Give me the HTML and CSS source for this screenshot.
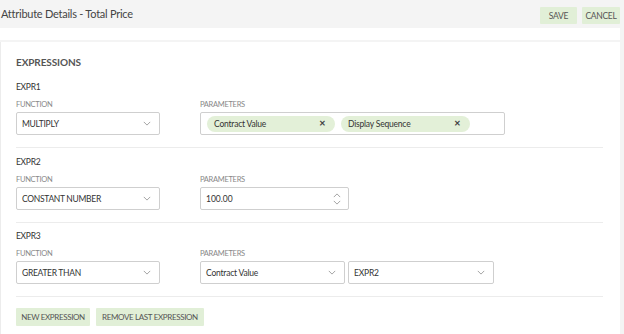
FILE: index.html
```html
<!DOCTYPE html>
<html>
<head>
<meta charset="utf-8">
<link rel="stylesheet" href="styles.css">
</head>
<body>
<header class="topbar">
  <div class="title">Attribute Details - Total Price</div>
  <div class="actions">
    <button class="btn">SAVE</button>
    <button class="btn">CANCEL</button>
  </div>
</header>
<div class="strip"></div>
<main class="card">
  <h2 class="heading">EXPRESSIONS</h2>

  <section class="expr">
    <div class="expr-name">EXPR1</div>
    <div class="row">
      <div class="col fn">
        <div class="label">FUNCTION</div>
        <div class="select w-fn"><span>MULTIPLY</span><svg class="chev" viewBox="0 0 10 6"><path d="M1 1l4 4 4-4"/></svg></div>
      </div>
      <div class="col">
        <div class="label">PARAMETERS</div>
        <div class="tags">
          <span class="chip"><span>Contract Value</span><span class="x">✕</span></span>
          <span class="chip"><span>Display Sequence</span><span class="x">✕</span></span>
        </div>
      </div>
    </div>
  </section>

  <section class="expr">
    <div class="expr-name">EXPR2</div>
    <div class="row">
      <div class="col fn">
        <div class="label">FUNCTION</div>
        <div class="select w-fn"><span>CONSTANT NUMBER</span><svg class="chev" viewBox="0 0 10 6"><path d="M1 1l4 4 4-4"/></svg></div>
      </div>
      <div class="col">
        <div class="label">PARAMETERS</div>
        <div class="number"><span>100.00</span>
          <span class="spin"><svg viewBox="0 0 10 6"><path d="M1 5l4-4 4 4"/></svg><svg viewBox="0 0 10 6"><path d="M1 1l4 4 4-4"/></svg></span>
        </div>
      </div>
    </div>
  </section>

  <section class="expr">
    <div class="expr-name">EXPR3</div>
    <div class="row">
      <div class="col fn">
        <div class="label">FUNCTION</div>
        <div class="select w-fn"><span>GREATER THAN</span><svg class="chev" viewBox="0 0 10 6"><path d="M1 1l4 4 4-4"/></svg></div>
      </div>
      <div class="col">
        <div class="label">PARAMETERS</div>
        <div class="pair">
          <div class="select w-p1 normal"><span>Contract Value</span><svg class="chev" viewBox="0 0 10 6"><path d="M1 1l4 4 4-4"/></svg></div>
          <div class="select w-p2 normal"><span>EXPR2</span><svg class="chev" viewBox="0 0 10 6"><path d="M1 1l4 4 4-4"/></svg></div>
        </div>
      </div>
    </div>
  </section>

  <div class="footer">
    <button class="btn big">NEW EXPRESSION</button>
    <button class="btn big">REMOVE LAST EXPRESSION</button>
  </div>
</main>
</body>
</html>
```

FILE: styles.css
```css
* { box-sizing: border-box; }
html, body { margin: 0; padding: 0; }
body {
  background: #f4f4f4;
  font-family: Lato, "Open Sans", sans-serif;
  color: #444;
  width: 624px;
  height: 334px;
  overflow: hidden;
}
.topbar {
  height: 28px;
  display: flex;
  align-items: center;
  justify-content: space-between;
  padding: 0 4px 0 1px;
}
.title { font-size: 11px; color: #444; margin-top: -1px; letter-spacing: -0.25px; }
.actions { display: flex; gap: 5px; margin-top: 3px; }
.btn {
  border: 0;
  background: #e1efd7;
  color: #555;
  font-family: inherit;
  font-size: 8.5px;
  height: 17px;
  padding: 0;
  border-radius: 1px;
  white-space: nowrap;
  letter-spacing: -0.3px;
  cursor: pointer;
}
.actions .btn:first-child { width: 37px; }
.actions .btn:last-child { width: 38px; }
.strip {
  height: 12px;
  width: 620px;
  background: #fff;
}
.card {
  margin-top: 2px;
  width: 620px;
  height: 300px;
  background: #fff;
  border-left: 1px solid #ececec;
  padding: 14px 17px 0 15px;
}
.heading {
  margin: 0 0 5px;
  font-size: 10px;
  line-height: 12px;
  font-weight: 700;
  color: #555;
  letter-spacing: -0.1px;
}
.expr {
  padding: 8px 0 12px;
  border-bottom: 1px solid #ececec;
}
.expr:nth-of-type(3) { padding-top: 7px; }
.expr-name {
  font-size: 8.5px;
  line-height: 12px;
  color: #333;
  margin-bottom: 7px;
  letter-spacing: -0.3px;
}
.row { display: flex; gap: 40px; }
.col { display: flex; flex-direction: column; }
.fn { width: 144px; }
.label {
  font-size: 7.5px;
  line-height: 10px;
  color: #888;
  margin-bottom: 2px;
  letter-spacing: -0.3px;
}
.select, .number, .tags {
  height: 23px;
  border: 1px solid #cfcfcf;
  border-radius: 2px;
  display: flex;
  align-items: center;
  background: #fff;
}
.select {
  justify-content: space-between;
  padding: 0 8px 0 5px;
  font-size: 8.5px;
  color: #333;
  text-transform: uppercase;
  letter-spacing: -0.3px;
}
.select.normal { text-transform: none; letter-spacing: -0.2px; }
.w-fn { width: 144px; }
.w-p1 { width: 145px; }
.w-p2 { width: 146px; }
.chev {
  width: 8px;
  height: 5px;
  fill: none;
  stroke: #999;
  stroke-width: 1.1;
}
.tags {
  width: 305px;
  padding: 0 6px;
  gap: 6px;
}
.chip {
  height: 16px;
  width: 128px;
  border-radius: 8px;
  background: #e3f0d8;
  display: flex;
  align-items: center;
  justify-content: space-between;
  padding: 0 9px 0 7px;
  font-size: 8.5px;
  color: #333;
  letter-spacing: -0.2px;
}
.chip:last-child { width: 129px; }
.x { font-size: 7.5px; color: #444; font-weight: 900; }
.number {
  width: 149px;
  padding: 0 7px 0 5px;
  justify-content: space-between;
  font-size: 8.5px;
  color: #333;
}
.spin { display: flex; flex-direction: column; gap: 2px; }
.spin svg {
  width: 8px;
  height: 5px;
  fill: none;
  stroke: #999;
  stroke-width: 1.1;
}
.pair { display: flex; gap: 3px; }
.footer {
  display: flex;
  gap: 6px;
  padding-top: 11px;
}
.btn.big { height: 18px; font-size: 8px; letter-spacing: -0.35px; }
.footer .btn:first-child { width: 74px; }
.footer .btn:last-child { width: 108px; }
```
